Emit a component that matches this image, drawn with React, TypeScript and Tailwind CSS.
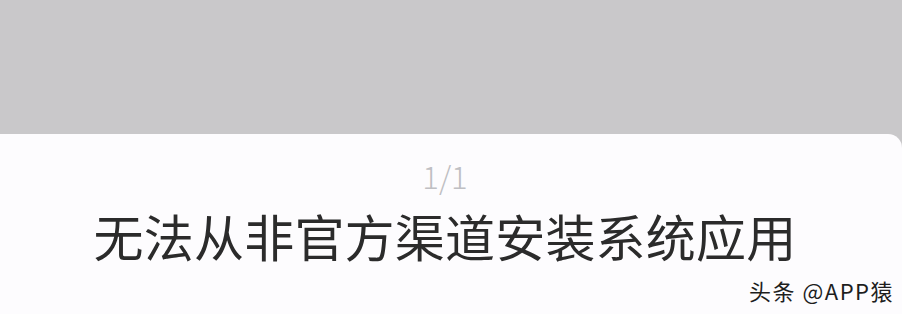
import React from 'react';

export default function App() {
  return (
    <div className="flex h-[314px] w-[902px] flex-col overflow-hidden bg-[#c9c8ca]" style={{ fontFamily: '"Noto Sans CJK SC", "Noto Sans", sans-serif' }}>
      <div className="h-[134px] shrink-0" />
      <div className="relative flex flex-1 flex-col items-center rounded-tr-[14px] bg-[#fdfcfe] pr-[12px]">
        <div className="mt-[26px] text-[31px] font-extralight leading-none text-[#bfbfc3]">1/1</div>
        <h1 className="mt-[19px] text-[50px] font-normal leading-none tracking-[0.2px] text-[#2b2b2b]">无法从非官方渠道安装系统应用</h1>
        <div className="absolute bottom-[13px] right-[8px] text-[22px] leading-none tracking-[1.5px] text-[#1e1e1e]">头条 @APP猿</div>
      </div>
    </div>
  );
}
